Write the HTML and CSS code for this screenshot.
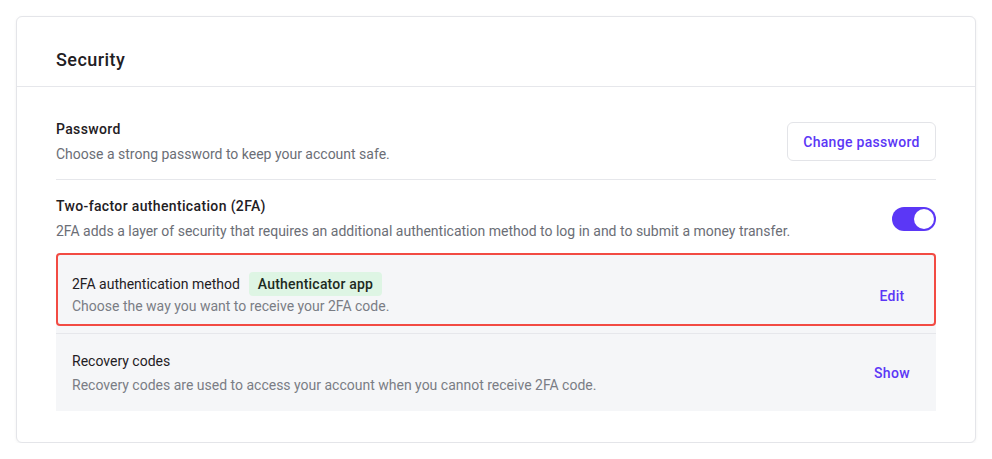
FILE: index.html
```html
<!DOCTYPE html>
<html>
<head>
<meta charset="utf-8">
<link rel="stylesheet" href="styles.css">
</head>
<body>
<div class="card">
  <div class="card-header">Security</div>
  <div class="card-body">
    <div class="row row-divided">
      <div class="row-text">
        <div class="title">Password</div>
        <div class="desc">Choose a strong password to keep your account safe.</div>
      </div>
      <button class="btn-outline">Change password</button>
    </div>
    <div class="row row-2fa">
      <div class="row-text">
        <div class="title">Two-factor authentication (2FA)</div>
        <div class="desc">2FA adds a layer of security that requires an additional authentication method to log in and to submit a money transfer.</div>
      </div>
      <div class="toggle"><span class="knob"></span></div>
    </div>
    <div class="sub-panel">
      <div class="highlight"></div>
      <div class="sub-row sub-row-first">
        <div class="row-text">
          <div class="sub-title-line">
            <span class="sub-title">2FA authentication method</span>
            <span class="badge">Authenticator app</span>
          </div>
          <div class="desc sub-desc-tight">Choose the way you want to receive your 2FA code.</div>
        </div>
        <div class="action action-edit">Edit</div>
      </div>
      <div class="sub-row sub-row-last">
        <div class="row-text">
          <div class="sub-title">Recovery codes</div>
          <div class="desc sub-desc">Recovery codes are used to access your account when you cannot receive 2FA code.</div>
        </div>
        <div class="action">Show</div>
      </div>
    </div>
  </div>
</div>
</body>
</html>
```
FILE: styles.css
```css
* { box-sizing: border-box; }
html, body { margin: 0; padding: 0; background: #ffffff; }
body {
  padding: 16px 16px 0 16px;
  font-family: Roboto, "Noto Sans", sans-serif;
  color: #1f2024;
}
.card {
  width: 960px;
  border: 1px solid #e4e5e9;
  border-radius: 6px;
  background: #fff;
  box-shadow: 0 1px 3px rgba(20, 20, 40, 0.06);
}
.card-header {
  padding: 31px 39px 14px;
  font-size: 18px;
  line-height: 24px;
  font-weight: 500;
  letter-spacing: 0.45px;
  border-bottom: 1px solid #e6e7eb;
}
.card-body {
  padding: 16px 39px 31px;
}
.row {
  display: flex;
  align-items: center;
  justify-content: space-between;
}
.row-divided {
  padding: 16px 0 15px;
  border-bottom: 1px solid #e6e7eb;
}
.row-2fa {
  padding: 16px 0 14px;
}
.title {
  font-size: 14px;
  line-height: 20px;
  font-weight: 500;
  letter-spacing: 0.35px;
  margin-bottom: 5px;
}
.desc {
  font-size: 14px;
  line-height: 20px;
  color: #6b6e76;
}
.btn-outline {
  height: 39px;
  width: 149px;
  border: 1px solid #e3e4e8;
  border-radius: 6px;
  background: #fff;
  color: #5b37f6;
  font-family: inherit;
  font-size: 14px;
  font-weight: 500;
  letter-spacing: 0.3px;
}
.toggle {
  width: 44px;
  height: 24px;
  border-radius: 12px;
  background: #5b37f6;
  display: flex;
  justify-content: flex-end;
  align-items: center;
  padding: 2px;
  margin-top: 1px;
}
.knob {
  width: 20px;
  height: 20px;
  border-radius: 50%;
  background: #fff;
}
.sub-panel {
  position: relative;
  background: #f5f6f8;
}
.highlight {
  position: absolute;
  left: 0;
  right: 0;
  top: -2px;
  height: 73px;
  border: 2px solid #f24b43;
  border-radius: 4px;
  pointer-events: none;
}
.sub-row {
  display: flex;
  align-items: center;
  justify-content: space-between;
  padding: 16px 14px 16px 16px;
}
.sub-row-first {
  padding-top: 17px;
  padding-bottom: 17px;
  border-bottom: 1px solid #e6e7eb;
}
.sub-row-last {
  padding-top: 17px;
}
.sub-title-line {
  display: flex;
  align-items: center;
  gap: 9px;
  height: 24px;
}
.sub-title {
  font-size: 14px;
  line-height: 20px;
  color: #1f2024;
}
.badge {
  background: #def5e4;
  color: #1d2a22;
  font-size: 14px;
  font-weight: 500;
  letter-spacing: 0.2px;
  line-height: 24px;
  padding: 0 9px;
  border-radius: 4px;
}
.sub-desc { margin-top: 4px; color: #7a7d85; }
.sub-desc-tight { color: #7a7d85; }
.action {
  width: 60px;
  text-align: center;
  color: #5b37f6;
  font-size: 14px;
  font-weight: 500;
  letter-spacing: 0.3px;
}
.action-edit {
  padding-top: 3px;
}
```
